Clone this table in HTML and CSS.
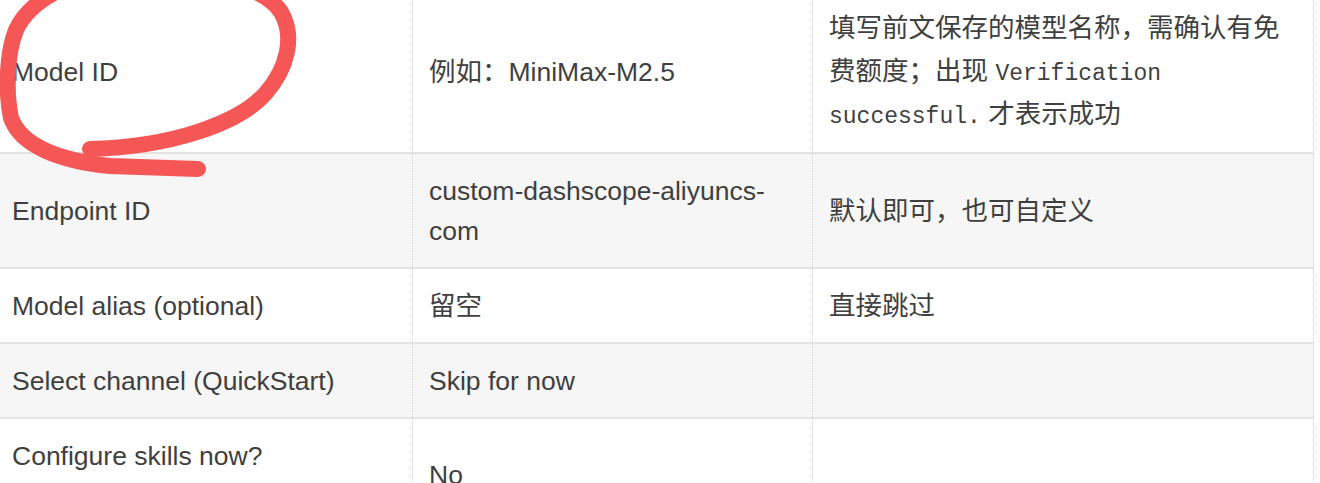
FILE: index.html
```html
<!DOCTYPE html>
<html lang="zh-CN">
<head>
    <meta charset="UTF-8">
    <meta name="viewport" content="width=device-width, initial-scale=1.0">
    <title>配置步骤</title>
    <link rel="stylesheet" href="styles.css">
</head>
<body>
    <div class="page">
        <table class="steps">
            <colgroup>
                <col class="col-key">
                <col class="col-value">
                <col class="col-note">
            </colgroup>
            <tbody>
                <tr>
                    <td>Model ID</td>
                    <td>例如：MiniMax-M2.5</td>
                    <td class="note">填写前文保存的模型名称，需确认有免费额度；出现 <code>Verification successful.</code> 才表示成功</td>
                </tr>
                <tr class="alt">
                    <td>Endpoint ID</td>
                    <td>custom-dashscope-aliyuncs-com</td>
                    <td>默认即可，也可自定义</td>
                </tr>
                <tr>
                    <td>Model alias (optional)</td>
                    <td>留空</td>
                    <td>直接跳过</td>
                </tr>
                <tr class="alt">
                    <td>Select channel (QuickStart)</td>
                    <td>Skip for now</td>
                    <td></td>
                </tr>
                <tr class="tall">
                    <td class="top">Configure skills now?</td>
                    <td>No</td>
                    <td></td>
                </tr>
            </tbody>
        </table>

        <!-- hand-drawn red circle around "Model ID" -->
        <svg class="mark" width="320" height="190" viewBox="0 0 320 190">
            <path d="M 90 149 C 170 147, 238 124, 265 94 C 288 68, 295 36, 281 12 C 264 -14, 200 -32, 120 -26 C 70 -21, 30 0, 16 30 C 6 55, 6 95, 11 118 C 21 146, 60 161, 110 166 L 198 169"
                  fill="none" stroke="#f55656" stroke-width="16" stroke-linecap="round" stroke-linejoin="round"/>
        </svg>
    </div>
</body>
</html>
```

FILE: styles.css
```css
body {
    margin: 0;
    background-color: #fff;
    color: #3f3f3f;
    font-family: "Liberation Sans", Arial, "Noto Sans CJK SC", sans-serif;
    font-size: 26.5px;
    overflow: hidden;
}

.page {
    position: relative;
    display: flow-root;
}

.steps {
    width: 1318px;
    margin: -12px 0 0 -5px;
    border-collapse: collapse;
    table-layout: fixed;
}

.col-key {
    width: 417px;
}

.col-value {
    width: 400px;
}

.col-note {
    width: 501px;
}

.steps td {
    padding: 17px 16px 16px;
    line-height: 40px;
    vertical-align: middle;
    border-top: 2px solid #e3e3e3;
    border-left: 1px dotted #cfcfcf;
    border-right: 1px dotted #cfcfcf;
}

.steps tr.alt td {
    background-color: #f6f6f6;
}

.steps td.note {
    line-height: 43px;
}

.steps tr.tall td {
    height: 78px;
}

.steps td.top {
    vertical-align: top;
}

code {
    font-family: "Liberation Mono", "Courier New", monospace;
    font-size: 23px;
    line-height: 1;
}

.mark {
    position: absolute;
    top: 0;
    left: 0;
    pointer-events: none;
}
```
